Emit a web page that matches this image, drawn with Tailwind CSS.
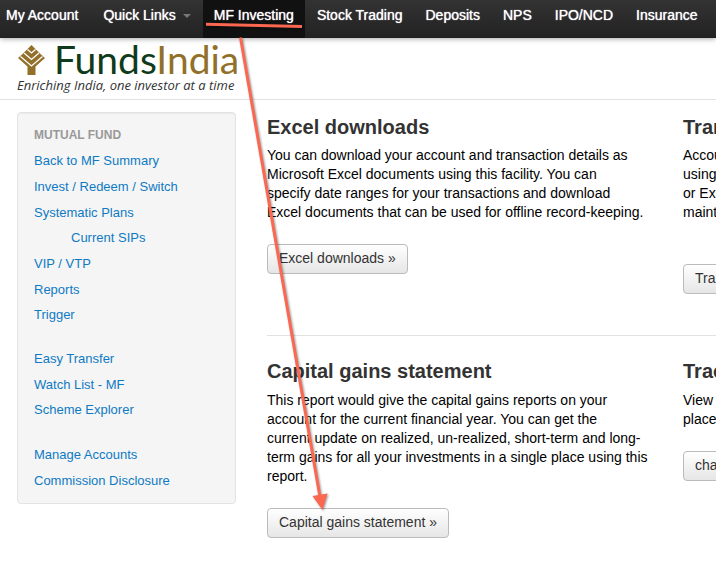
<!DOCTYPE html>
<html lang="en">
<head>
<meta charset="utf-8">
<meta name="viewport" content="width=device-width, initial-scale=1">
<title>FundsIndia - MF Investing</title>
<script src="https://cdn.jsdelivr.net/npm/@tailwindcss/browser@4"></script>
</head>
<body class="relative min-h-screen overflow-x-hidden bg-white font-['Liberation_Sans',Arial,sans-serif] text-[14px] text-black">
<nav aria-label="Main" class="relative flex h-[38px] gap-[1px] overflow-x-clip bg-linear-to-b from-[#333] to-[#222] pl-[6px] leading-[30px] whitespace-nowrap text-white shadow-[0_1px_5px_rgba(0,0,0,0.35)] [text-shadow:0_0_1px_#fff]">
  <a href="#" class="pr-[13px]">My Account</a>
  <a href="#" class="flex gap-[7px] px-[11px]">Quick Links
    <svg class="mt-[14px] h-[4px] w-[8px]" viewBox="0 0 8 4" aria-hidden="true"><path d="M0 0h8L4 4z" fill="#777"/></svg>
  </a>
  <a href="#" aria-current="page" class="bg-[#111] px-[11px]">MF Investing</a>
  <a href="#" class="px-[11px]">Stock Trading</a>
  <a href="#" class="px-[11px]">Deposits</a>
  <a href="#" class="px-[11px]">NPS</a>
  <a href="#" class="px-[11px]">IPO/NCD</a>
  <a href="#" class="px-[11px]">Insurance</a>
</nav>

<header class="h-[62px] border-b border-[#e2e2e2] pt-[4px] pl-[17px]">
  <a href="#" class="inline-block whitespace-nowrap">
    <span class="flex h-[35px] items-start gap-[9px]">
      <svg class="mt-[3px] h-[30px] w-[28px]" viewBox="0 0 28 30" aria-hidden="true">
        <path d="M14.500 0 20 5.500 24 9.500 28 13 18.500 21.500V30H10.500V21.500L1 13 5 9.500 9 5.500Z" fill="#93702a"/>
        <path d="M10.500 4.500l4 3.500 4-3.500M7 8l7.500 6.500L22 8M3.500 11.500l11 9.500 11-9.500" fill="none" stroke="#fff" stroke-width="1.300"/>
      </svg>
      <span class="text-[39px] leading-[34px] text-[#0f3b1c] [font-family:Lato,sans-serif]">Funds<span class="text-[#93702a]">India</span></span>
    </span>
    <span class="block text-[13px] leading-[16px] text-[#333] italic [font-family:'Open_Sans',sans-serif]">Enriching India, one investor at a time</span>
  </a>
</header>

<div class="flex items-start pt-[12px] pl-[17px]">
  <aside class="w-[219px] shrink-0 rounded-[4px] border border-[#e3e3e3] bg-[#f5f5f5] px-[16px] pt-[12px] pb-[9px] text-[13px] text-[#0e7ac4] shadow-[inset_0_1px_1px_rgba(0,0,0,0.05)]">
    <h3 class="h-[23px] text-[12px] leading-[20px] font-bold text-[#999]">MUTUAL FUND</h3>
    <ul class="grid h-[180px] auto-rows-fr items-center">
      <li><a href="#">Back to MF Summary</a></li>
      <li><a href="#">Invest / Redeem / Switch</a></li>
      <li><a href="#">Systematic Plans</a></li>
      <li class="pl-[37px]"><a href="#">Current SIPs</a></li>
      <li><a href="#">VIP / VTP</a></li>
      <li><a href="#">Reports</a></li>
      <li><a href="#">Trigger</a></li>
    </ul>
    <ul class="mt-[18px] grid h-[77px] auto-rows-fr items-center">
      <li><a href="#">Easy Transfer</a></li>
      <li><a href="#">Watch List - MF</a></li>
      <li><a href="#">Scheme Explorer</a></li>
    </ul>
    <ul class="mt-[19px] grid h-[52px] auto-rows-fr items-center">
      <li><a href="#">Manage Accounts</a></li>
      <li><a href="#">Commission Disclosure</a></li>
    </ul>
  </aside>

  <main class="ml-[31px] min-w-0 flex-1 overflow-hidden leading-[19px]">
    <div class="grid h-[224px] grid-cols-[390px_390px] items-start gap-x-[26px] border-b border-[#e2e2e2]">
      <section>
        <h2 class="text-[20px] leading-[30px] font-bold text-[#333]">Excel downloads</h2>
        <p class="mt-[4px] whitespace-nowrap">You can download your account and transaction details as<br>Microsoft Excel documents using this facility. You can<br>specify date ranges for your transactions and download<br>Excel documents that can be used for offline record-keeping.</p>
        <button type="button" class="mt-[22px] h-[30px] rounded-[4px] border border-[#bbb] bg-linear-to-b from-white to-[#e6e6e6] px-[11px] pb-[2px] text-[#333]">Excel downloads »</button>
      </section>
      <section>
        <h2 class="text-[20px] leading-[30px] font-bold text-[#333]">Transactions</h2>
        <p class="mt-[4px] h-[95px] whitespace-nowrap">Account<br>using<br>or Excel<br>maintain</p>
        <button type="button" class="mt-[23px] h-[30px] rounded-[4px] border border-[#bbb] bg-linear-to-b from-white to-[#e6e6e6] px-[11px] pb-[2px] text-[#333]">Transactions »</button>
      </section>
    </div>
    <div class="grid grid-cols-[390px_390px] items-start gap-x-[26px] pt-[20px]">
      <section>
        <h2 class="text-[20px] leading-[30px] font-bold text-[#333]">Capital gains statement</h2>
        <p class="mt-[5px] whitespace-nowrap">This report would give the capital gains reports on your<br>account for the current financial year. You can get the<br>current update on realized, un-realized, short-term and long-<br>term gains for all your investments in a single place using this<br>report.</p>
        <button type="button" class="mt-[22px] h-[30px] rounded-[4px] border border-[#bbb] bg-linear-to-b from-white to-[#e6e6e6] px-[11px] pb-[2px] text-[#333]">Capital gains statement »</button>
      </section>
      <section>
        <h2 class="text-[20px] leading-[30px] font-bold text-[#333]">Track</h2>
        <p class="mt-[5px] whitespace-nowrap">View<br>place</p>
        <button type="button" class="mt-[22px] h-[30px] rounded-[4px] border border-[#bbb] bg-linear-to-b from-white to-[#e6e6e6] px-[11px] pb-[2px] text-[#333]">change »</button>
      </section>
    </div>
  </main>
</div>

<svg class="pointer-events-none absolute top-0 left-0 h-[571px] w-[716px] drop-shadow-[1px_1px_1px_rgba(0,0,0,0.4)]" viewBox="0 0 716 571" aria-hidden="true">
  <path d="M206 24.2 302 26.5M240.5 37.500 320 497" fill="none" stroke="#fb6750" stroke-width="3"/>
  <path d="M312.500 496 327.500 493.500 322.500 510Z" fill="#fb6750"/>
</svg>
</body>
</html>
